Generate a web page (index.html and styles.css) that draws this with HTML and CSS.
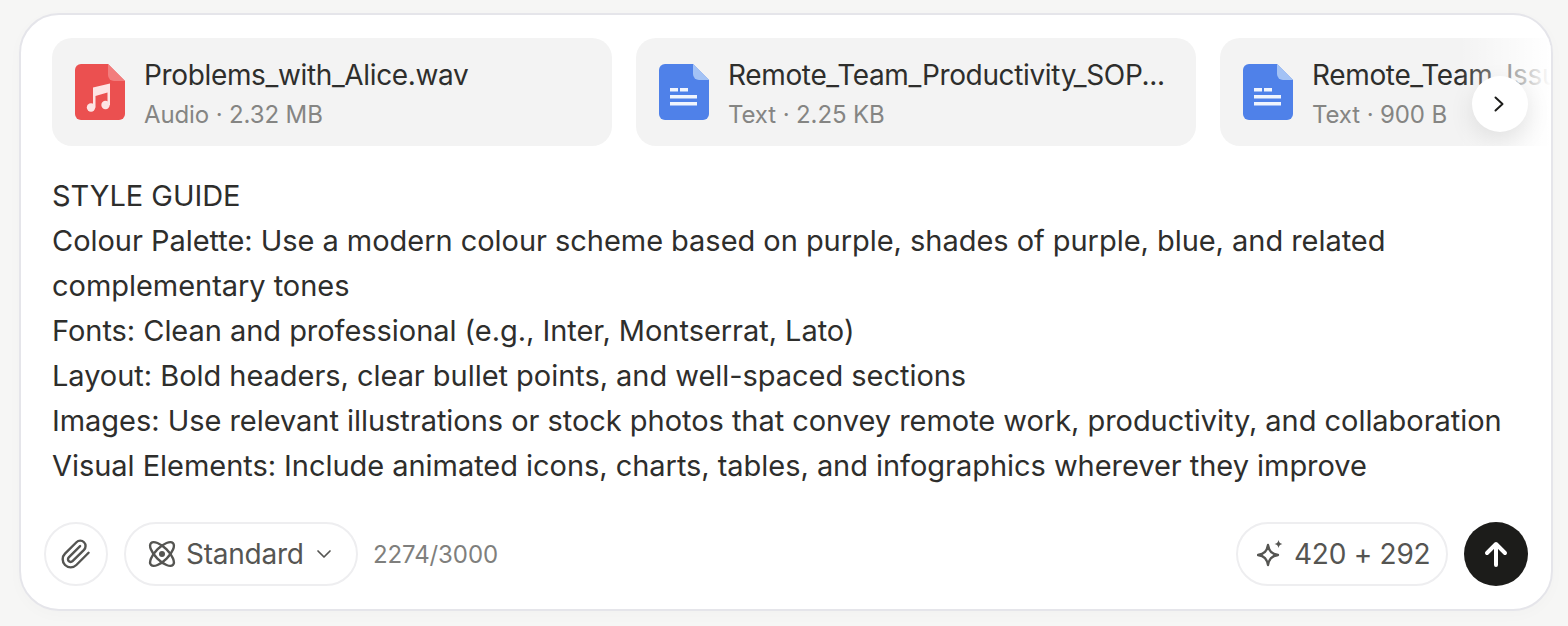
FILE: index.html
```html
<!DOCTYPE html>
<html lang="en">
<head>
<meta charset="utf-8">
<title>Composer</title>
<link rel="stylesheet" href="styles.css">
</head>
<body>
<main class="composer">
  <div class="attachments">
    <div class="track">
      <div class="file">
        <svg class="file-icon" viewBox="0 0 50 56"><path fill="#eb5050" d="M6 0H33L50 17V50a6 6 0 0 1-6 6H6a6 6 0 0 1-6-6V6a6 6 0 0 1 6-6z"/><path fill="#f27d7d" d="M33 0L50 17H39a6 6 0 0 1-6-6z"/><path fill="#fde4e4" d="M18 23.500L35 19.500V41h-2.500V28.500L20.500 32V43.500H18z"/><circle cx="16" cy="43.500" r="4.200" fill="#fde4e4"/><circle cx="30.500" cy="41" r="4.200" fill="#fde4e4"/></svg>
        <div class="file-text"><div class="file-name">Problems_with_Alice.wav</div><div class="file-meta">Audio · 2.32 MB</div></div>
      </div>
      <div class="file">
        <svg class="file-icon" viewBox="0 0 50 56"><path fill="#4f81e9" d="M6 0H34L50 16V50a6 6 0 0 1-6 6H6a6 6 0 0 1-6-6V6a6 6 0 0 1 6-6z"/><path fill="#a3c2f5" d="M34 0L50 16H40a6 6 0 0 1-6-6z"/><path fill="#f0f4fd" d="M11 24h8v3.500h-8zM21 24h8v3.500h-8zM11 31h27v3.500H11zM11 38h27v3.500H11z"/></svg>
        <div class="file-text"><div class="file-name">Remote_Team_Productivity_SOP...</div><div class="file-meta">Text · 2.25 KB</div></div>
      </div>
      <div class="file">
        <svg class="file-icon" viewBox="0 0 50 56"><path fill="#4f81e9" d="M6 0H34L50 16V50a6 6 0 0 1-6 6H6a6 6 0 0 1-6-6V6a6 6 0 0 1 6-6z"/><path fill="#a3c2f5" d="M34 0L50 16H40a6 6 0 0 1-6-6z"/><path fill="#f0f4fd" d="M11 24h8v3.500h-8zM21 24h8v3.500h-8zM11 31h27v3.500H11zM11 38h27v3.500H11z"/></svg>
        <div class="file-text"><div class="file-name">Remote_Team_Issue_Log.txt</div><div class="file-meta">Text · 900 B</div></div>
      </div>
    </div>
    <div class="fade"></div>
    <button class="next" aria-label="Next"><svg viewBox="0 0 24 24" width="24" height="24"><path d="M7.500 5.500L14.500 12l-7 6.500" fill="none" stroke="#1c1c1a" stroke-width="2" stroke-linecap="round" stroke-linejoin="round"/></svg></button>
  </div>
  <div class="prompt">STYLE GUIDE<br>Colour Palette: Use a modern colour scheme based on purple, shades of purple, blue, and related complementary tones<br>Fonts: Clean and professional (e.g., Inter, Montserrat, Lato)<br>Layout: Bold headers, clear bullet points, and well-spaced sections<br>Images: Use relevant illustrations or stock photos that convey remote work, productivity, and collaboration<br>Visual Elements: Include animated icons, charts, tables, and infographics wherever they improve</div>
  <div class="toolbar">
    <button class="round" aria-label="Attach"><svg viewBox="0 0 24 24" width="32" height="32"><path d="M21.440 11.050l-9.190 9.190a6 6 0 0 1-8.490-8.490l8.570-8.570A4 4 0 1 1 18 8.840l-8.590 8.570a2 2 0 0 1-2.830-2.830l8.490-8.480" fill="none" stroke="#555552" stroke-width="1.800" stroke-linecap="round" stroke-linejoin="round"/></svg></button>
    <button class="pill model">
      <svg viewBox="0 0 30 30" width="30" height="30" fill="none" stroke="#555552" stroke-width="2.400"><ellipse cx="15" cy="15" rx="6.500" ry="15.500" transform="rotate(45 15 15)"/><ellipse cx="15" cy="15" rx="6.500" ry="15.500" transform="rotate(-45 15 15)"/><circle cx="15" cy="15" r="3" fill="#555552" stroke="none"/></svg>
      <span>Standard</span>
      <svg class="caret" viewBox="0 0 16 16" width="16" height="16"><path d="M2 5l6 6 6-6" fill="none" stroke="#555552" stroke-width="1.700" stroke-linecap="round" stroke-linejoin="round"/></svg>
    </button>
    <span class="count">2274/3000</span>
    <button class="pill credits">
      <svg viewBox="0 0 28 28" width="28" height="28" fill="none"><path d="M11 5c1.200 6.300 3.500 8.800 10 10-6.500 1.200-8.800 3.700-10 10-1.200-6.300-3.500-8.800-10-10 6.500-1.200 8.800-3.700 10-10z" stroke="#555552" stroke-width="2.300" stroke-linejoin="round"/><path d="M21.500 0c.5 2.500 1.500 3.500 4 4-2.500.5-3.500 1.500-4 4-.5-2.500-1.500-3.500-4-4 2.500-.5 3.500-1.500 4-4z" fill="#555552"/></svg>
      <span>420 + 292</span>
    </button>
    <button class="send" aria-label="Send"><svg viewBox="0 0 28 28" width="28" height="28"><path d="M14 25V5M5 13L14 4l9 9" fill="none" stroke="#fff" stroke-width="4" stroke-linecap="round" stroke-linejoin="round"/></svg></button>
  </div>
</main>
</body>
</html>
```
FILE: styles.css
```css
* { box-sizing: border-box; }
html, body { margin: 0; height: 100%; }
body {
  background: #f6f6f5;
  font-family: Inter, "Liberation Sans", sans-serif;
  color: #2e2e2c;
  padding: 13px 15px 15px 19px;
  overflow: hidden;
}
button { font: inherit; color: inherit; margin: 0; background: #fff; }
.composer {
  height: 598px;
  background: #fff;
  border: 2px solid #e5e5ea;
  border-radius: 40px;
  padding: 23px 0 0;
  box-shadow: 0 4px 16px rgba(0, 0, 0, .02);
  overflow: hidden;
  display: flex;
  flex-direction: column;
}
.attachments { position: relative; overflow: hidden; height: 108px; padding-left: 31px; flex: none; }
.track { display: flex; gap: 24px; width: max-content; }
.file {
  width: 560px;
  height: 108px;
  background: #f3f3f3;
  border-radius: 20px;
  padding: 0 20px 0 23px;
  display: flex;
  align-items: center;
  gap: 19px;
}
.file-icon { width: 50px; height: 56px; flex: none; display: block; }
.file-text { min-width: 0; flex: 1; padding-top: 6px; }
.file-name { font-size: 28px; line-height: 40px; letter-spacing: -.35px; white-space: nowrap; overflow: hidden; }
.file-meta { font-size: 24px; line-height: 40px; letter-spacing: -.12px; color: #858583; }
.fade {
  position: absolute;
  top: 0;
  right: 0;
  bottom: 0;
  width: 92px;
  background: linear-gradient(to right, rgba(255, 255, 255, 0), #fff);
}
.next {
  position: absolute;
  left: 1451px;
  top: 38px;
  width: 56px;
  height: 56px;
  border: 0;
  padding: 0;
  border-radius: 50%;
  background: #fff;
  box-shadow: 0 8px 24px rgba(0, 0, 0, .1);
  display: flex;
  align-items: center;
  justify-content: center;
}
.prompt {
  font-size: 29px;
  line-height: 45px;
  letter-spacing: -.04px;
  padding: 0 31px;
  margin-top: 27px;
  height: 315px;
  overflow: hidden;
}
.toolbar {
  display: flex;
  align-items: center;
  padding: 34px 23px 0;
  color: #555552;
}
.round, .send {
  width: 64px;
  height: 64px;
  border-radius: 50%;
  padding: 0;
  display: flex;
  align-items: center;
  justify-content: center;
  flex: none;
}
.round { border: 2px solid #eeeef0; margin-right: 16px; }
.pill {
  height: 64px;
  border: 2px solid #eeeef0;
  border-radius: 32px;
  display: flex;
  align-items: center;
  font-size: 28px;
  letter-spacing: -.25px;
  padding: 0;
  color: #555552;
}
.model { width: 234px; padding-left: 21px; }
.model span { margin-left: 9px; }
.caret { margin-left: 12px; }
.count { font-size: 24px; letter-spacing: -.1px; color: #7f7f7d; margin-left: 15px; }
.credits { width: 212px; padding-left: 19px; margin-left: auto; margin-right: 16px; }
.credits span { margin-left: 9px; }
.send { border: 0; background: #1c1c1a; }
```
